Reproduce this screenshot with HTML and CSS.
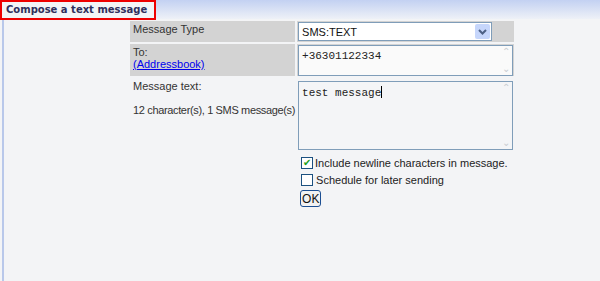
FILE: index.html
```html
<!DOCTYPE html>
<html>
<head>
    <title>Compose a text message</title>
    <link rel="stylesheet" href="styles.css">
</head>
<body>
    <div class="header">
        <div class="title">Compose a text message</div>
    </div>
    <div class="page">
        <table class="form">
            <tr class="shaded">
                <td class="label">Message Type</td>
                <td class="value">
                    <div class="select">
                        <span>SMS:TEXT</span>
                        <span class="arrow">
                            <svg width="9" height="6" viewBox="0 0 9 6"><path d="M1 1 L4.5 4.5 L8 1" fill="none" stroke="#4d6185" stroke-width="2"/></svg>
                        </span>
                    </div>
                </td>
            </tr>
            <tr class="shaded">
                <td class="label">To:<br><a href="#">(Addressbook)</a></td>
                <td class="value">
                    <div class="field to">
                        <span class="mono">+36301122334</span>
                        <span class="scroll"><span>&#8963;</span><span>&#8964;</span></span>
                    </div>
                </td>
            </tr>
            <tr>
                <td class="label">Message text:<br><br><span class="count">12 character(s), 1 SMS message(s)</span></td>
                <td class="value">
                    <div class="field message">
                        <span class="mono">test message<span class="caret"></span></span>
                        <span class="scroll"><span>&#8963;</span><span>&#8964;</span></span>
                    </div>
                </td>
            </tr>
            <tr>
                <td></td>
                <td class="value options">
                    <div class="check"><span class="box checked">&#10004;</span> Include newline characters in message.</div>
                    <div class="check"><span class="box"></span>Schedule for later sending</div>
                    <button class="ok">OK</button>
                </td>
            </tr>
        </table>
    </div>
</body>
</html>
```

FILE: styles.css
```css
body {
    margin: 0;
    font-family: "Liberation Sans", Arial, sans-serif;
    font-size: 11px;
    color: #333;
    background-color: #f3f4f6;
    height: 281px;
    overflow: hidden;
}

.header {
    height: 19px;
    background: linear-gradient(#c3d1f2, #eef1f7);
}

.title {
    display: inline-block;
    box-sizing: border-box;
    width: 156px;
    height: 20px;
    border: 2px solid #ee0000;
    padding: 2px 0 0 4px;
    font-family: "DejaVu Sans", Verdana, sans-serif;
    font-size: 10px;
    font-weight: bold;
    white-space: nowrap;
    color: #2f2f5c;
    background-color: #f3f4f6;
}

.page {
    margin-left: 2px;
    border-left: 2px solid #b9c8ea;
    height: 262px;
}

.form {
    margin-left: 124px;
    border-spacing: 2px;
}

.form td {
    padding: 0;
    vertical-align: top;
}

.shaded td {
    background-color: #d3d3d3;
}

.label {
    width: 160px;
    padding: 2px 0 0 3px !important;
    white-space: nowrap;
}

.count {
    letter-spacing: -0.35px;
}

.label a {
    color: #0000ee;
}

.value {
    width: 216px;
    padding-left: 1px !important;
}

.select {
    display: flex;
    align-items: center;
    justify-content: space-between;
    box-sizing: border-box;
    width: 194px;
    height: 19px;
    margin: 1px 0 1px 0;
    border: 1px solid #7f9db9;
    background-color: #fff;
    padding-left: 3px;
    font-size: 11px;
    color: #111;
}

.arrow {
    display: flex;
    align-items: center;
    justify-content: center;
    width: 15px;
    height: 15px;
    margin-right: 1px;
    background-color: #c6d6fb;
    border-radius: 2px;
}

.field {
    display: flex;
    justify-content: space-between;
    box-sizing: border-box;
    width: 215px;
    border: 1px solid #7f9db9;
    background-color: #f4f5f7;
}

.to {
    height: 31px;
    margin-top: 1px;
    background-color: #fafafa;
}

.message {
    height: 69px;
    margin-top: 3px;
}

.mono {
    font-family: "Liberation Mono", "Courier New", monospace;
    font-size: 11px;
    padding: 4px 0 0 3px;
    color: #222;
}

.caret {
    display: inline-block;
    width: 1px;
    height: 12px;
    background-color: #000;
    vertical-align: -2px;
}

.scroll {
    display: flex;
    flex-direction: column;
    justify-content: space-between;
    width: 13px;
    color: #c8cdd2;
    font-size: 10px;
    line-height: 12px;
    text-align: center;
}

.options {
    padding-top: 2px !important;
    font-size: 11px;
    color: #222;
}

.check {
    display: flex;
    align-items: center;
    height: 17px;
    padding-left: 3px;
}

.box {
    display: inline-flex;
    align-items: center;
    justify-content: center;
    box-sizing: border-box;
    width: 12px;
    height: 12px;
    margin-right: 3px;
    border: 1px solid #1c5180;
    background-color: #fff;
    font-size: 10px;
    color: #21a121;
}

.box.checked {
    margin-right: 2px;
}

.ok {
    margin: 2px 0 0 2px;
    padding: 0 1px;
    height: 17px;
    font-family: "Liberation Sans", Arial, sans-serif;
    font-size: 12px;
    color: #111;
    background-color: #f2f2f2;
    border: 1px solid #1c4e92;
    border-radius: 3px;
}
```
